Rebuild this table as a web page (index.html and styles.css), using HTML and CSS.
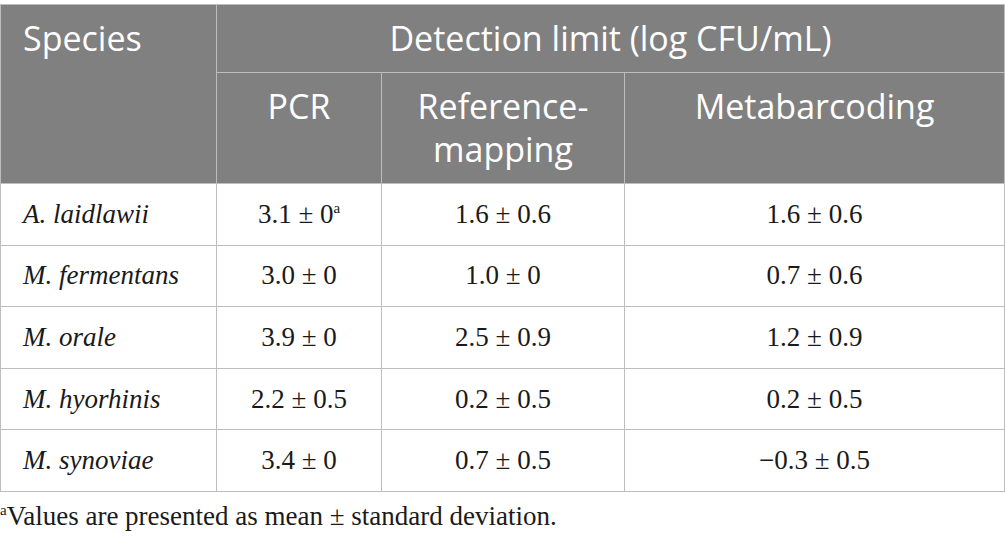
FILE: index.html
```html
<!DOCTYPE html>
<html>
<head>
<meta charset="utf-8">
<link rel="stylesheet" href="styles.css">
</head>
<body>
<div class="wrap">
<table class="data">
  <colgroup>
    <col class="c1"><col class="c2"><col class="c3"><col class="c4">
  </colgroup>
  <thead>
    <tr>
      <th class="left" rowspan="2">Species</th>
      <th colspan="3">Detection limit (log CFU/mL)</th>
    </tr>
    <tr>
      <th>PCR</th>
      <th>Reference-<br>mapping</th>
      <th>Metabarcoding</th>
    </tr>
  </thead>
  <tbody>
    <tr><td class="sp">A. laidlawii</td><td>3.1 ± 0<sup>a</sup></td><td>1.6 ± 0.6</td><td>1.6 ± 0.6</td></tr>
    <tr><td class="sp">M. fermentans</td><td>3.0 ± 0</td><td>1.0 ± 0</td><td>0.7 ± 0.6</td></tr>
    <tr><td class="sp">M. orale</td><td>3.9 ± 0</td><td>2.5 ± 0.9</td><td>1.2 ± 0.9</td></tr>
    <tr><td class="sp">M. hyorhinis</td><td>2.2 ± 0.5</td><td>0.2 ± 0.5</td><td>0.2 ± 0.5</td></tr>
    <tr><td class="sp">M. synoviae</td><td>3.4 ± 0</td><td>0.7 ± 0.5</td><td>−0.3 ± 0.5</td></tr>
  </tbody>
</table>
<p class="note"><sup>a</sup>Values are presented as mean ± standard deviation.</p>
</div>
</body>
</html>
```
FILE: styles.css
```css
html, body {
  margin: 0;
  padding: 0;
  background: #ffffff;
}
.wrap {
  padding-top: 4px;
  width: 1005px;
}
.data {
  border-collapse: collapse;
  width: 1004px;
  table-layout: fixed;
}
.c1 { width: 216px; }
.c2 { width: 165px; }
.c3 { width: 243px; }
.c4 { width: 380px; }
.data th {
  background: #808080;
  color: #ffffff;
  font-family: "Open Sans", "Noto Sans", sans-serif;
  font-weight: 400;
  font-size: 34px;
  line-height: 43px;
  vertical-align: top;
  text-align: center;
  padding: 12px 10px 12px;
  border: 1px solid #bdbdbd;
}
.data th.left {
  text-align: left;
  padding-left: 22px;
}
.data td {
  font-family: "Liberation Serif", "Times New Roman", serif;
  font-size: 27px;
  color: #1a1a1a;
  text-align: center;
  vertical-align: middle;
  height: 60.6px;
  padding: 0 10px;
  border: 1px solid #bdbdbd;
}
.data td.sp {
  text-align: left;
  font-style: italic;
  padding-left: 22px;
}
.data sup {
  font-size: 15px;
  line-height: 0;
  vertical-align: 10px;
}
.note {
  margin: 9px 0 0 0;
  font-family: "Liberation Serif", "Times New Roman", serif;
  font-size: 27px;
  color: #1a1a1a;
}
.note sup {
  font-size: 15px;
  line-height: 0;
  vertical-align: 10px;
}
```
